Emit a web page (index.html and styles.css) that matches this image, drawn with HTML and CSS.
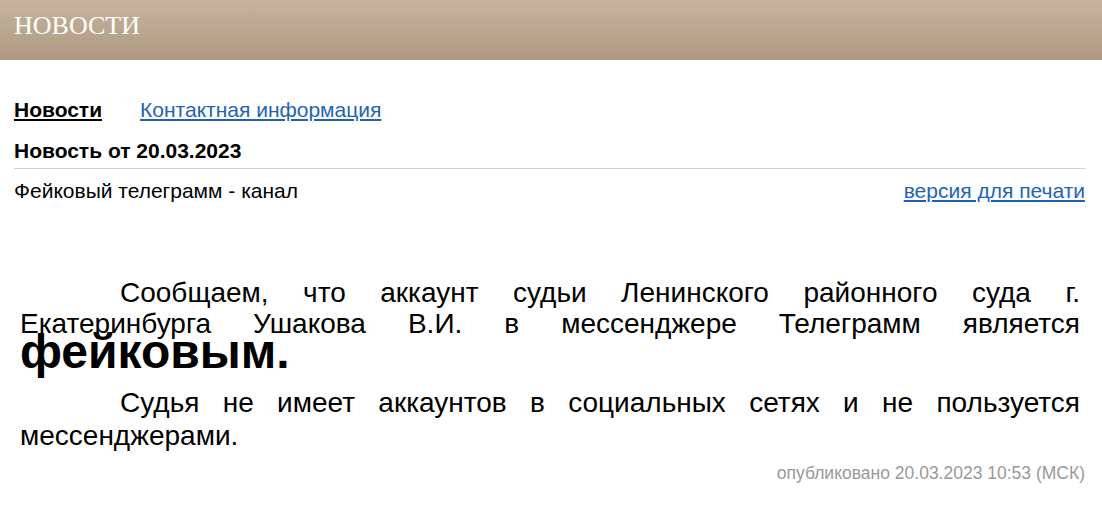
FILE: index.html
```html
<!DOCTYPE html>
<html lang="ru">
<head>
    <meta charset="UTF-8">
    <meta name="viewport" content="width=device-width, initial-scale=1.0">
    <title>Новости</title>
    <link rel="stylesheet" href="styles.css">
</head>
<body>
    <div class="page-header">
        <h1>Новости</h1>
    </div>

    <div class="content">
        <div class="tabs">
            <a class="tab active" href="#">Новости</a>
            <a class="tab" href="#">Контактная информация</a>
        </div>

        <div class="news-title">Новость от 20.03.2023</div>

        <div class="news-meta">
            <span>Фейковый телеграмм - канал</span>
            <a href="#">версия для печати</a>
        </div>

        <div class="news-body">
            <p>Сообщаем, что аккаунт судьи Ленинского районного суда г. Екатеринбурга Ушакова В.И. в мессенджере Телеграмм является <b class="accent">фейковым.</b></p>
            <p class="second">Судья не имеет аккаунтов в социальных сетях и не пользуется мессенджерами.</p>
        </div>

        <div class="published">опубликовано 20.03.2023 10:53 (МСК)</div>
    </div>
</body>
</html>
```

FILE: styles.css
```css
body {
    margin: 0;
    font-family: "Liberation Sans", Arial, sans-serif;
    color: #000;
    background-color: #fff;
}

a {
    color: #1f63b5;
}

.page-header {
    height: 60px;
    padding: 0 14px;
    background: linear-gradient(to bottom, #c7b4a0, #ac997e);
}

.page-header h1 {
    margin: 0;
    font-family: "Liberation Serif", "Times New Roman", serif;
    font-weight: normal;
    font-size: 26px;
    line-height: 52px;
    color: #fff;
    text-transform: uppercase;
}

.content {
    padding: 0 17px 20px 14px;
}

.tabs {
    display: flex;
    gap: 38px;
    margin-top: 38px;
    font-size: 21px;
}

.tab.active {
    color: #000;
    font-weight: bold;
}

.news-title {
    margin-top: 17px;
    padding-bottom: 5px;
    border-bottom: 1px solid #d0d0d0;
    font-size: 21px;
    font-weight: bold;
}

.news-meta {
    display: flex;
    justify-content: space-between;
    margin-top: 10px;
    font-size: 21px;
}

.news-body {
    margin-top: 74px;
    padding: 0 5px 0 6px;
}

.news-body p {
    margin: 0;
    font-size: 28px;
    line-height: 31px;
    text-align: justify;
    text-indent: 100px;
}

.news-body p.second {
    margin-top: 12px;
    line-height: 33px;
}

.accent {
    font-size: 48px;
    line-height: 26px;
}

.published {
    margin-top: 11px;
    text-align: right;
    font-size: 17.5px;
    color: #999;
}
```
